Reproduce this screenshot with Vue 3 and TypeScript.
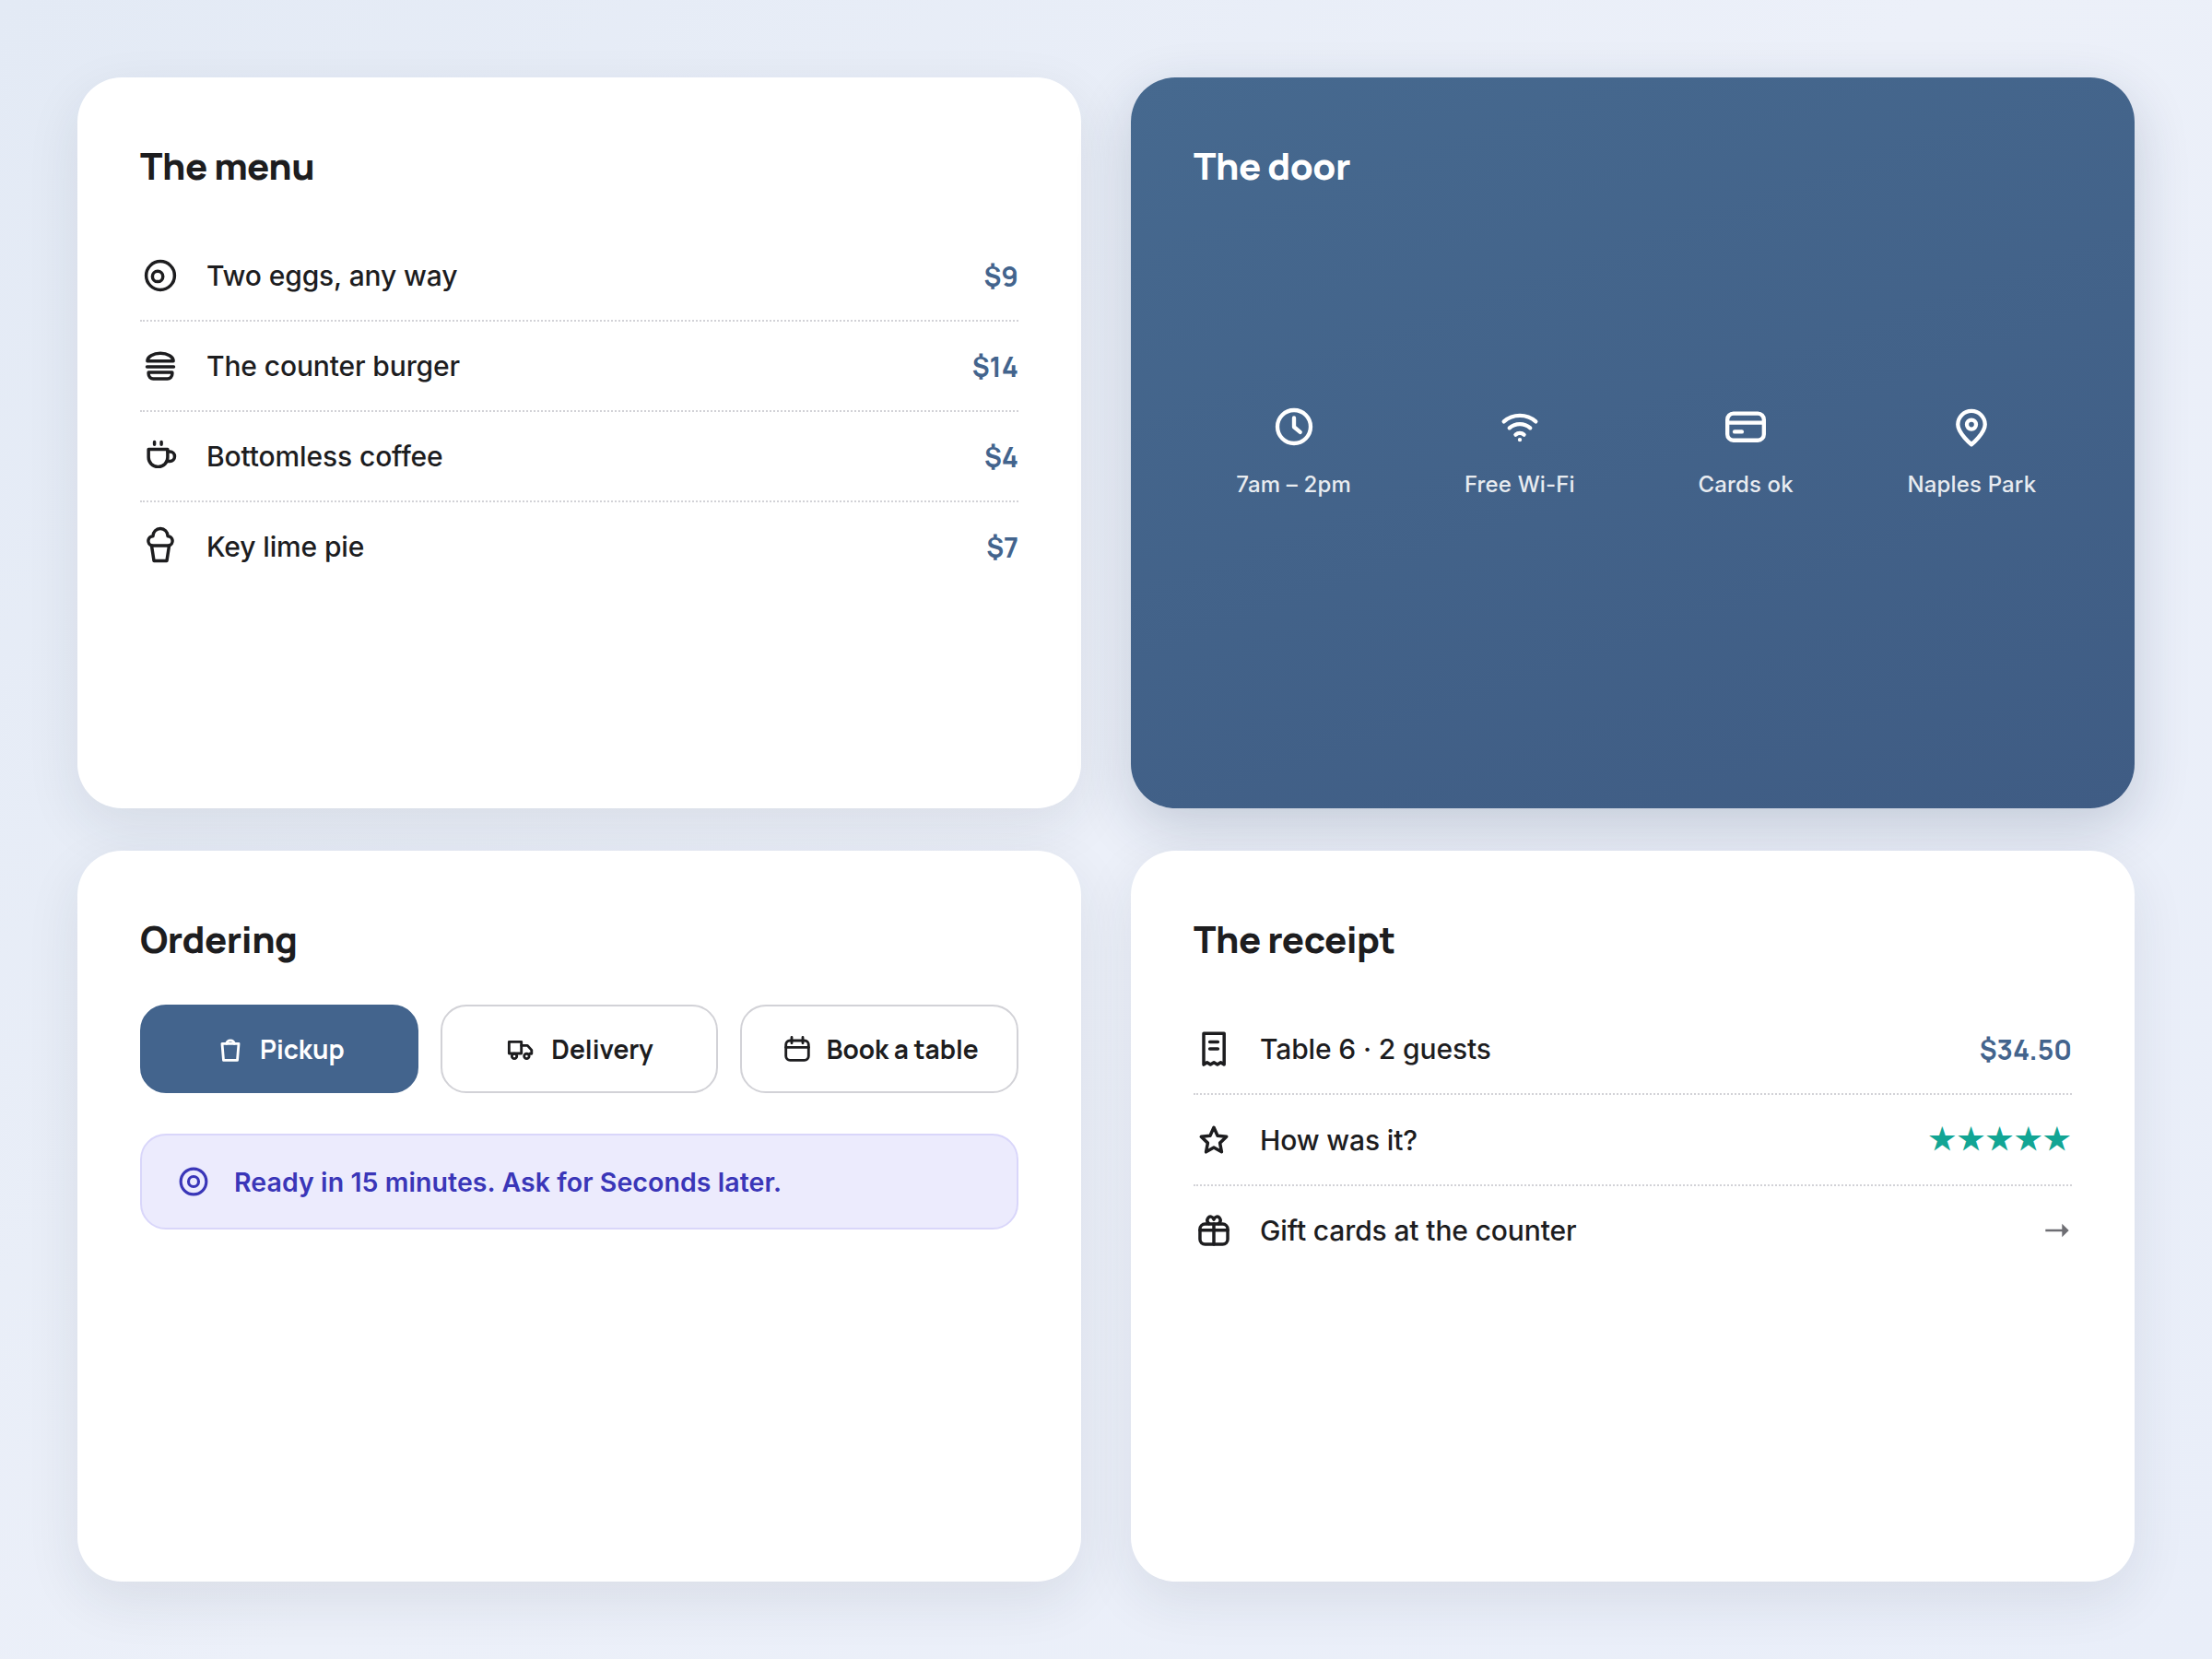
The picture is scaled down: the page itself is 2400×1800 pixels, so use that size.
<script setup lang="ts">
import { ref } from 'vue'

type Shape = { d?: string; c?: [number, number, number]; r?: [number, number, number, number, number]; fill?: boolean }

const icons: Record<string, Shape[]> = {
  egg: [{ c: [12, 12, 8.4] }, { c: [10.4, 12.5, 3.1] }],
  burger: [
    { d: 'M4.3 9.1c0-2.6 3.5-4.6 7.7-4.6s7.7 2 7.7 4.6z' },
    { d: 'M4.1 12.5h15.8' },
    { d: 'M5 15.8h14v1a2.8 2.8 0 0 1-2.8 2.8H7.8A2.8 2.8 0 0 1 5 16.8z' },
  ],
  coffee: [
    { d: 'M5 7.9h11.3v4.8a5.5 5.5 0 0 1-5.5 5.5h-.3A5.5 5.5 0 0 1 5 12.7z' },
    { d: 'M16.3 9.3h1.3a2.85 2.85 0 0 1 0 5.7h-1.7' },
    { d: 'M8.5 3.5v1.6M12.6 3.5v1.6' },
  ],
  pie: [
    { d: 'M6.9 11.4a2.8 2.8 0 0 1 .7-5.5 4.4 4.6 0 0 1 8.8 0 2.8 2.8 0 0 1 .7 5.5z' },
    { d: 'M6.8 11.4l1.4 9.1h7.6l1.4-9.1' },
  ],
  clock: [{ c: [12, 12, 8.3] }, { d: 'M12 7.6v4.5l3.1 2.6' }],
  wifi: [
    { d: 'M4 9.4a12.2 12.2 0 0 1 16 0' },
    { d: 'M6.8 12.6a8 8 0 0 1 10.4 0' },
    { d: 'M9.9 16a3.2 3.2 0 0 1 4.2 0' },
    { c: [12, 18.5, 1], fill: true },
  ],
  card: [{ r: [2.85, 5.4, 18.3, 13.4, 3] }, { d: 'M2.9 10h18.2' }, { d: 'M6.5 14.5h3.6' }],
  pin: [
    { d: 'M12 20.9s6.8-5.6 6.8-10a6.8 6.8 0 0 0-13.6 0c0 4.4 6.8 10 6.8 10z' },
    { c: [12, 10.9, 2.3] },
  ],
  bag: [{ d: 'M6 8.2h12l-1 12H7z' }, { d: 'M9.2 8.2a2.85 2.8 0 0 1 5.6 0' }],
  truck: [
    { d: 'M2.9 6.9h8.9v8.4H2.9z' },
    { d: 'M11.8 9.6h4.4l3 3.3v2.6h-1.4' },
    { c: [6.7, 17.3, 1.8] },
    { c: [15.6, 17.3, 1.8] },
  ],
  calendar: [{ r: [3.8, 6, 16.4, 14.2, 3] }, { d: 'M3.8 10.9h16.4' }, { d: 'M8 3.6v4.2M16 3.6v4.2' }],
  ring: [{ c: [12, 12, 8.3] }, { c: [12, 12, 3.3] }],
  receipt: [
    { d: 'M6 21.3V2.9h12.1v18.4l-2-1.3-2 1.3-2.05-1.3-2.05 1.3-2-1.3z' },
    { d: 'M9.6 7.9h4.8M9.6 12h4.8' },
  ],
  star: [{ d: 'M12 4.5l2.2 4.9 5.3.6-3.9 3.7 1 5.3L12 16.4 7.4 19l1-5.3L4.5 10l5.3-.6z' }],
  gift: [
    { r: [3.8, 8.2, 16.4, 12, 3] },
    { d: 'M3.8 11.9h16.4M12 8.2v12' },
    { d: 'M9.2 8C8 7 7.9 5.6 8.6 4.6c.9-1.2 2.6-1 3.4.9.8-1.9 2.5-2.1 3.4-.9.7 1 .6 2.4-.6 3.4' },
  ],
}

const menu = [
  { icon: 'egg', label: 'Two eggs, any way', price: '$9' },
  { icon: 'burger', label: 'The counter burger', price: '$14' },
  { icon: 'coffee', label: 'Bottomless coffee', price: '$4' },
  { icon: 'pie', label: 'Key lime pie', price: '$7' },
]
const door = [
  { icon: 'clock', label: '7am – 2pm' },
  { icon: 'wifi', label: 'Free Wi-Fi' },
  { icon: 'card', label: 'Cards ok' },
  { icon: 'pin', label: 'Naples Park' },
]
const modes = [
  { icon: 'bag', label: 'Pickup' },
  { icon: 'truck', label: 'Delivery' },
  { icon: 'calendar', label: 'Book a table' },
]
const receipt = [
  { icon: 'receipt', label: 'Table 6 · 2 guests', value: '$34.50', kind: 'price' },
  { icon: 'star', label: 'How was it?', value: '★★★★★', kind: 'stars' },
  { icon: 'gift', label: 'Gift cards at the counter', value: '', kind: 'arrow' },
]
const active = ref('Pickup')
</script>

<template>
  <main class="page">
    <section class="panel">
      <h2>The menu</h2>
      <ul class="rows">
        <li v-for="m in menu" :key="m.label" class="row">
          <svg class="icon" viewBox="0 0 24 24">
            <template v-for="(s, i) in icons[m.icon]" :key="i">
              <path v-if="s.d" :d="s.d" />
              <circle v-if="s.c" :cx="s.c[0]" :cy="s.c[1]" :r="s.c[2]" />
            </template>
          </svg>
          <span class="label">{{ m.label }}</span>
          <span class="price">{{ m.price }}</span>
        </li>
      </ul>
    </section>

    <section class="panel door">
      <h2>The door</h2>
      <div class="facts">
        <div v-for="f in door" :key="f.label" class="fact">
          <svg class="icon" viewBox="0 0 24 24">
            <template v-for="(s, i) in icons[f.icon]" :key="i">
              <path v-if="s.d" :d="s.d" />
              <rect v-if="s.r" :x="s.r[0]" :y="s.r[1]" :width="s.r[2]" :height="s.r[3]" :rx="s.r[4]" />
              <circle v-if="s.c" :class="{ solid: s.fill }" :cx="s.c[0]" :cy="s.c[1]" :r="s.c[2]" />
            </template>
          </svg>
          <span>{{ f.label }}</span>
        </div>
      </div>
    </section>

    <section class="panel">
      <h2>Ordering</h2>
      <div class="modes">
        <button v-for="m in modes" :key="m.label" class="mode" :class="{ on: active === m.label }" @click="active = m.label">
          <svg class="icon" viewBox="0 0 24 24">
            <template v-for="(s, i) in icons[m.icon]" :key="i">
              <path v-if="s.d" :d="s.d" />
              <rect v-if="s.r" :x="s.r[0]" :y="s.r[1]" :width="s.r[2]" :height="s.r[3]" :rx="s.r[4]" />
              <circle v-if="s.c" :cx="s.c[0]" :cy="s.c[1]" :r="s.c[2]" />
            </template>
          </svg>
          <span>{{ m.label }}</span>
        </button>
      </div>
      <div class="notice">
        <svg class="icon" viewBox="0 0 24 24">
          <circle v-for="(s, i) in icons.ring" :key="i" :cx="s.c![0]" :cy="s.c![1]" :r="s.c![2]" />
        </svg>
        <span>Ready in 15 minutes. Ask for Seconds later.</span>
      </div>
    </section>

    <section class="panel">
      <h2>The receipt</h2>
      <ul class="rows">
        <li v-for="m in receipt" :key="m.label" class="row" :class="{ rating: m.kind === 'stars' }">
          <svg class="icon" viewBox="0 0 24 24">
            <template v-for="(s, i) in icons[m.icon]" :key="i">
              <path v-if="s.d" :d="s.d" />
              <rect v-if="s.r" :x="s.r[0]" :y="s.r[1]" :width="s.r[2]" :height="s.r[3]" :rx="s.r[4]" />
            </template>
          </svg>
          <span class="label">{{ m.label }}</span>
          <svg v-if="m.kind === 'arrow'" class="arrow" viewBox="0 0 30 16">
            <path d="M1.3 6.8h18V.8l7.4 7.2-7.4 7.2V9.2h-18z" />
          </svg>
          <span v-else :class="m.kind">{{ m.value }}</span>
        </li>
      </ul>
    </section>
  </main>
</template>

<style scoped>
.page {
  box-sizing: border-box;
  width: 2400px;
  height: 1800px;
  padding: 84px;
  display: grid;
  grid-template-columns: 1fr 1fr;
  grid-template-rows: 1fr 1fr;
  column-gap: 54px;
  row-gap: 46px;
  background: linear-gradient(135deg, #e3eaf5 0%, #ecf0f9 50%, #e9eef9 100%);
  font-family: Inter, "Liberation Sans", sans-serif;
  color: #1d1d1f;
}
.panel {
  box-sizing: border-box;
  min-width: 0;
  padding: 68px;
  border-radius: 48px;
  background: #fff;
  box-shadow: 0 20px 60px rgba(30, 42, 60, 0.09);
  display: flex;
  flex-direction: column;
}
.door {
  background: linear-gradient(160deg, #46698f 0%, #3f5c84 100%);
  box-shadow: 0 20px 60px rgba(28, 50, 80, 0.19);
  color: #fff;
}
h2 {
  margin: 0;
  font-family: Manrope, Inter, sans-serif;
  font-size: 40px;
  line-height: 56px;
  font-weight: 800;
  letter-spacing: -0.48px;
}
.icon {
  flex: none;
  width: 44px;
  height: 44px;
  fill: none;
  stroke: currentColor;
  stroke-width: 1.9;
  stroke-linecap: round;
  stroke-linejoin: round;
}
.icon .solid {
  fill: currentColor;
  stroke: none;
}
.rows {
  list-style: none;
  margin: 43px 0 0;
  padding: 0;
}
.row {
  display: flex;
  align-items: center;
  gap: 28px;
  height: 96px;
  border-bottom: 2px dotted #d2d2d7;
}
.rating {
  height: 97px;
}
.row:last-child {
  border-bottom: 0;
}
.label {
  flex: 1;
  font-size: 30px;
  font-weight: 500;
  letter-spacing: -0.13px;
}
.price {
  font-family: Manrope, Inter, sans-serif;
  font-size: 30px;
  font-weight: 700;
  color: #43648d;
}
.stars {
  padding-bottom: 7px;
  font-family: "Noto Sans CJK JP", sans-serif;
  font-size: 30px;
  line-height: 44px;
  letter-spacing: 1.15px;
  color: #12a594;
}
.arrow {
  width: 30px;
  height: 16px;
  fill: #6e6e73;
}
.facts {
  flex: 1;
  display: grid;
  grid-template-columns: repeat(4, 1fr);
  column-gap: 28px;
  align-items: center;
  padding-bottom: 38px;
}
.fact {
  display: flex;
  flex-direction: column;
  align-items: center;
  gap: 20px;
  font-size: 24px;
  line-height: 34px;
  font-weight: 500;
  letter-spacing: 0.15px;
}
.fact span {
  opacity: 0.88;
}
.fact .icon {
  width: 52px;
  height: 52px;
  stroke-width: 2;
}
.modes {
  display: flex;
  gap: 24px;
  margin-top: 43px;
}
.mode {
  flex: 1 1 0;
  box-sizing: border-box;
  height: 96px;
  padding: 0;
  display: flex;
  align-items: center;
  justify-content: center;
  gap: 14px;
  border: 2px solid #d2d2d7;
  border-radius: 28px;
  background: #fff;
  color: inherit;
  font: 700 28px Manrope, Inter, sans-serif;
}
.mode.on {
  background: #43648d;
  border-color: #43648d;
  color: #fff;
}
.mode .icon {
  width: 36px;
  height: 36px;
}
.notice {
  box-sizing: border-box;
  height: 104px;
  margin-top: 44px;
  padding: 0 36px;
  display: flex;
  align-items: center;
  gap: 24px;
  border: 2px solid #d9d6fa;
  border-radius: 28px;
  background: #ecebfd;
  color: #3a36b8;
  font-size: 28.5px;
  font-weight: 600;
  letter-spacing: 0.07px;
}
.notice .icon {
  width: 40px;
  height: 40px;
}
</style>

<style>
body {
  margin: 0;
}
</style>
